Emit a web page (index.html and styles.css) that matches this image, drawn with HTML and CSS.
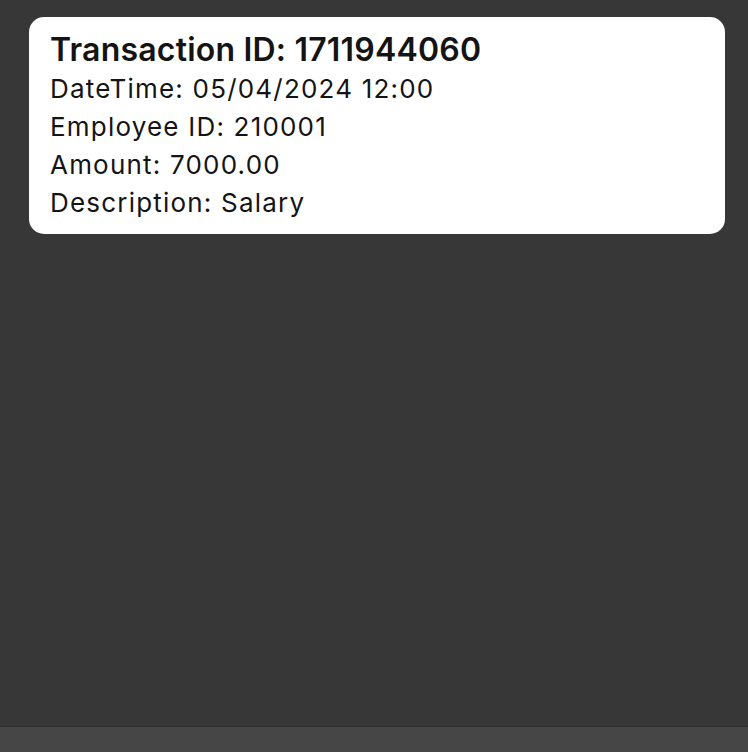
FILE: index.html
```html
<!DOCTYPE html>
<html>
<head>
<meta charset="utf-8">
<link rel="stylesheet" href="styles.css">
</head>
<body>
<div class="screen">
  <div class="content">
    <div class="card">
      <div class="title">Transaction ID: 1711944060</div>
      <div class="line">DateTime: 05/04/2024 12:00</div>
      <div class="line">Employee ID: 210001</div>
      <div class="line">Amount: 7000.00</div>
      <div class="line">Description: Salary</div>
    </div>
  </div>
  <div class="bottombar"></div>
</div>
</body>
</html>
```
FILE: styles.css
```css
html, body {
  margin: 0;
  padding: 0;
}
body {
  background: #373737;
  font-family: Inter, "Noto Sans", sans-serif;
  color: #141414;
}
.screen {
  width: 748px;
  height: 752px;
  display: flex;
  flex-direction: column;
}
.content {
  flex: 1;
  padding: 17px 23px 0 29px;
}
.card {
  background: #ffffff;
  border-radius: 15px;
  padding: 13px 21px 0 21px;
  height: 217px;
  box-sizing: border-box;
}
.title {
  font-size: 32px;
  font-weight: 600;
  line-height: 40px;
  letter-spacing: 0.2px;
}
.line {
  font-size: 26px;
  line-height: 38px;
  letter-spacing: 1.2px;
}
.bottombar {
  height: 25px;
  background: #464646;
  border-top: 1px solid #2f2f2f;
}
```
